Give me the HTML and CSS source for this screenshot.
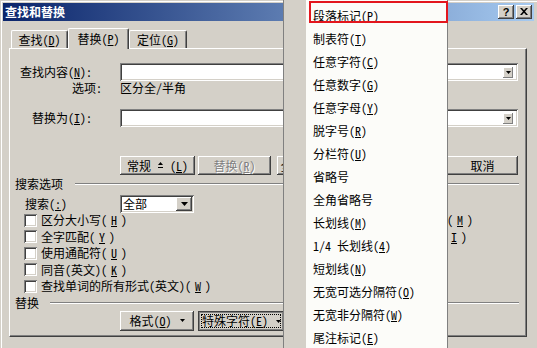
FILE: index.html
```html
<!DOCTYPE html>
<html lang="zh-CN">
<head>
<meta charset="utf-8">
<title>查找和替换</title>
<link rel="stylesheet" href="styles.css">
</head>
<body>
<div class="window">
  <div class="titlebar">
    <span class="title-text">查找和替换</span>
    <div class="title-btns">
      <span class="cap-btn help">?</span>
      <span class="cap-btn close"><svg width="8" height="7" viewBox="0 0 8 7"><path d="M0 0h2l2 2.3L6 0h2L5 3.5 8 7H6L4 4.7 2 7H0l3-3.5z"/></svg></span>
    </div>
  </div>
  <div class="client">
    <div class="tabs">
      <div class="tab t1">查找(<u>D</u>)</div>
      <div class="tab t2">替换(<u>P</u>)</div>
      <div class="tab t3">定位(<u>G</u>)</div>
    </div>
    <div class="panel">
      <div class="field f-find">
        <span class="flabel">查找内容(<u>N</u>):</span>
        <div class="combo"><span class="mini"><svg width="5" height="3" viewBox="0 0 5 3"><path d="M0 0h5L2.5 3z"/></svg></span></div>
      </div>
      <div class="opts"><span class="opts-label">选项:</span><span>区分全/半角</span></div>
      <div class="field f-repl">
        <span class="flabel">替换为(<u>I</u>):</span>
        <div class="combo"><span class="mini"><svg width="5" height="3" viewBox="0 0 5 3"><path d="M0 0h5L2.5 3z"/></svg></span></div>
      </div>
      <div class="btn-row top-btns">
        <div class="btn b-more"><span>常规</span><svg class="less" width="5" height="6" viewBox="0 0 5 6"><path d="M2.5 0L5 3H0z"/><rect x="0" y="5" width="5" height="1"/></svg><span>(<u>L</u>)</span></div>
        <div class="btn b-repl disabled">替换(<u>R</u>)</div>
        <div class="btn b-all">全部替换(<u>A</u>)</div>
        <div class="btn b-cancel">取消</div>
      </div>
      <div class="group-title g-search"><span>搜索选项</span><i class="etch"></i></div>
      <div class="search-row">
        <span class="slabel">搜索(<u>:</u>)</span>
        <div class="select"><span class="sel-text">全部</span><span class="drop"><svg width="7" height="4" viewBox="0 0 7 4"><path d="M0 0h7L3.5 4z"/></svg></span></div>
      </div>
      <div class="checks">
        <div class="col left">
          <div class="chk"><span class="box"></span>区分大小写(<u>H</u>)</div>
          <div class="chk"><span class="box"></span>全字匹配(<u>Y</u>)</div>
          <div class="chk"><span class="box"></span>使用通配符(<u>U</u>)</div>
          <div class="chk"><span class="box"></span>同音(英文)(<u>K</u>)</div>
          <div class="chk"><span class="box"></span>查找单词的所有形式(英文)(<u>W</u>)</div>
        </div>
        <div class="col right">
          <div class="chk"><span class="box"></span>区分全/半角(<u>M</u>)</div>
          <div class="chk"><span class="box"></span>区分卡什达(<u>I</u>)</div>
        </div>
      </div>
      <div class="group-title g-repl"><span>替换</span><i class="etch"></i></div>
      <div class="btn-row bottom-btns">
        <div class="btn b-fmt">格式(<u>O</u>)<svg class="dd" width="5" height="3" viewBox="0 0 5 3"><path d="M0 0h5L2.5 3z"/></svg></div>
        <div class="btn b-special pressed">特殊字符(<u>E</u>)<svg class="dd" width="5" height="3" viewBox="0 0 5 3"><path d="M0 0h5L2.5 3z"/></svg></div>
      </div>
    </div>
  </div>
  <div class="menu">
    <div class="mi">段落标记(<u>P</u>)</div>
    <div class="mi">制表符(<u>T</u>)</div>
    <div class="mi">任意字符(<u>C</u>)</div>
    <div class="mi">任意数字(<u>G</u>)</div>
    <div class="mi">任意字母(<u>Y</u>)</div>
    <div class="mi">脱字号(<u>R</u>)</div>
    <div class="mi">分栏符(<u>U</u>)</div>
    <div class="mi">省略号</div>
    <div class="mi">全角省略号</div>
    <div class="mi">长划线(<u>M</u>)</div>
    <div class="mi">1/4 长划线(<u>4</u>)</div>
    <div class="mi">短划线(<u>N</u>)</div>
    <div class="mi">无宽可选分隔符(<u>O</u>)</div>
    <div class="mi">无宽非分隔符(<u>W</u>)</div>
    <div class="mi">尾注标记(<u>E</u>)</div>
    <div class="mark"></div>
  </div>
</div>
</body>
</html>
```

FILE: styles.css
```css
* { box-sizing: border-box; margin: 0; padding: 0; }
html, body { width: 537px; height: 348px; overflow: hidden; }
body {
  background: #d4d0c8;
  font-family: "Noto Sans Mono CJK SC", "Noto Sans CJK SC", sans-serif;
  font-size: 12px;
  line-height: 14px;
  color: #000;
}
u { text-decoration: underline; text-underline-offset: 1px; }
svg { display: block; fill: #000; }

.window {
  position: relative;
  width: 537px;
  height: 348px;
  padding: 3px 3px 0 3px;
  background: #d4d0c8;
  box-shadow: inset 1px 1px 0 #d4d0c8, inset 2px 2px 0 #fff;
}

/* title bar */
.titlebar {
  height: 18px;
  display: flex;
  align-items: center;
  justify-content: space-between;
  padding: 0 2px;
  background: linear-gradient(to right, #0a246a, #a6caf0);
}
.title-text { color: #fff; font-weight: bold; line-height: 18px; }
.title-btns { display: flex; gap: 2px; }
.cap-btn {
  width: 16px; height: 14px;
  background: #d4d0c8;
  box-shadow: inset -1px -1px #404040, inset 1px 1px #fff, inset -2px -2px #808080;
  display: flex; align-items: center; justify-content: center;
}
.cap-btn.help { font: bold 11px/14px "Liberation Sans", sans-serif; padding-bottom: 1px; }
.cap-btn.close svg { margin-bottom: 1px; }

/* tabs */
.tabs {
  display: flex;
  align-items: flex-end;
  height: 20px;
  margin: 7px 0 0 8px;
}
.tab {
  height: 18px;
  border-left: 1px solid #fff;
  border-top: 1px solid #fff;
  border-right: 1px solid #404040;
  border-radius: 2px 2px 0 0;
  box-shadow: inset -1px 0 #808080;
  display: flex;
  justify-content: center;
  padding-top: 2px;
  line-height: 14px;
}
.t1 { width: 57px; }
.t2 {
  width: 61px; height: 21px;
  margin-bottom: -1px;
  padding-top: 0;
  align-items: center;
  position: relative; z-index: 1;
  background: #d4d0c8;
}
.t3 { width: 58px; }

/* panel */
.panel {
  margin-left: 6px;
  width: 518px;
  border-top: 1px solid #fff;
  border-left: 1px solid #fff;
  border-right: 1px solid #404040;
  border-bottom: 1px solid #404040;
  box-shadow: inset -1px -1px 0 #808080;
  padding-bottom: 5px;
}

.field {
  display: grid;
  grid-template-columns: 82px 398px;
  column-gap: 28px;
  align-items: center;
  height: 18px;
  margin-top: 14px;
}
.flabel { text-align: right; white-space: nowrap; }
.combo {
  height: 18px;
  background: #fff;
  box-shadow: inset 1px 1px #808080, inset -1px -1px #fff, inset 2px 2px #404040, inset -2px -2px #d4d0c8;
  display: flex; align-items: center; justify-content: flex-end;
  padding-right: 5px;
}
.mini {
  width: 10px; height: 11px;
  background: #d4d0c8;
  box-shadow: inset -1px -1px #808080, inset 1px 1px #fff;
  display: flex; align-items: center; justify-content: center;
}
.opts { display: flex; padding-left: 62px; height: 14px; }
.opts-label { width: 48px; }

/* buttons */
.btn-row { display: flex; padding-left: 110px; }
.top-btns { margin-top: 29px; height: 19px; }
.btn {
  height: 100%;
  background: #d4d0c8;
  box-shadow: inset -1px -1px #404040, inset 1px 1px #fff, inset -2px -2px #808080;
  display: flex; align-items: center; justify-content: center;
  white-space: nowrap;
  flex: none;
}
.btn.disabled { color: #808080; text-shadow: 1px 1px 0 #fff; }
.b-more { width: 75px; margin-right: 3px; }
.b-more .less { margin: 0 7px 1px 7px; }
.b-repl { width: 73px; margin-right: 6px; }
.b-all { width: 73px; margin-right: 97px; }
.b-cancel { width: 71px; }

/* group titles */
.group-title { display: flex; align-items: center; height: 14px; padding-left: 5px; padding-right: 7px; }
.group-title .etch { flex: 1; height: 2px; margin-left: 11px; border-top: 1px solid #808080; border-bottom: 1px solid #fff; }
.g-search { margin-top: 2px; }
.g-search .etch { margin-left: 12px; }
.g-repl { margin-top: 1px; }

/* search row */
.search-row { display: flex; align-items: center; margin-top: 4px; height: 18px; padding-left: 15px; }
.slabel { width: 95px; }
.select {
  width: 74px; height: 18px;
  background: #fff;
  box-shadow: inset 1px 1px #808080, inset -1px -1px #fff, inset 2px 2px #404040, inset -2px -2px #d4d0c8;
  display: flex; align-items: center; justify-content: space-between;
  padding: 2px;
}
.sel-text { padding-left: 1px; }
.drop {
  width: 16px; height: 14px;
  background: #d4d0c8;
  box-shadow: inset -1px -1px #404040, inset 1px 1px #fff, inset -2px -2px #808080;
  display: flex; align-items: center; justify-content: center;
}

/* checkboxes */
.checks { display: flex; margin-top: -1px; }
.col { display: grid; grid-auto-rows: 16.5px; }
.col.left { width: 354px; padding-left: 14px; }
.col.right { padding-left: 0; }
.chk { display: flex; align-items: center; gap: 4px; white-space: nowrap; }
.box {
  width: 13px; height: 13px;
  background: #fff;
  box-shadow: inset 1px 1px #808080, inset -1px -1px #fff, inset 2px 2px #404040, inset -2px -2px #d4d0c8;
  flex: none;
}

/* bottom buttons */
.bottom-btns { margin-top: 1px; height: 20px; }
.b-fmt { width: 74px; margin-right: 4px; }
.b-special { width: 86px; position: relative; }
.btn .dd { margin-left: 8px; }
.btn.pressed {
  box-shadow: inset 0 0 0 1px #404040, inset 0 0 0 2px #808080;
  padding: 1px 0 0 1px;
}
.btn.pressed::after {
  content: "";
  position: absolute;
  inset: 4px;
  outline: 1px dotted #000;
}

/* popup menu */
.menu {
  position: absolute;
  left: 283px;
  top: 0;
  width: 165px;
  height: 360px;
  z-index: 5;
  border-left: 1px solid #808080;
  border-right: 1px solid #808080;
  background: linear-gradient(to right, #d4d0c8 0, #d4d0c8 22px, #fcfcf9 22px);
  padding-top: 4px;
}
.mi { height: 23px; line-height: 23px; padding-left: 29px; white-space: nowrap; }
.mark {
  position: absolute;
  left: 25px;
  top: 1px;
  width: 139px;
  height: 22px;
  border: 2px solid #e3161e;
}
```
